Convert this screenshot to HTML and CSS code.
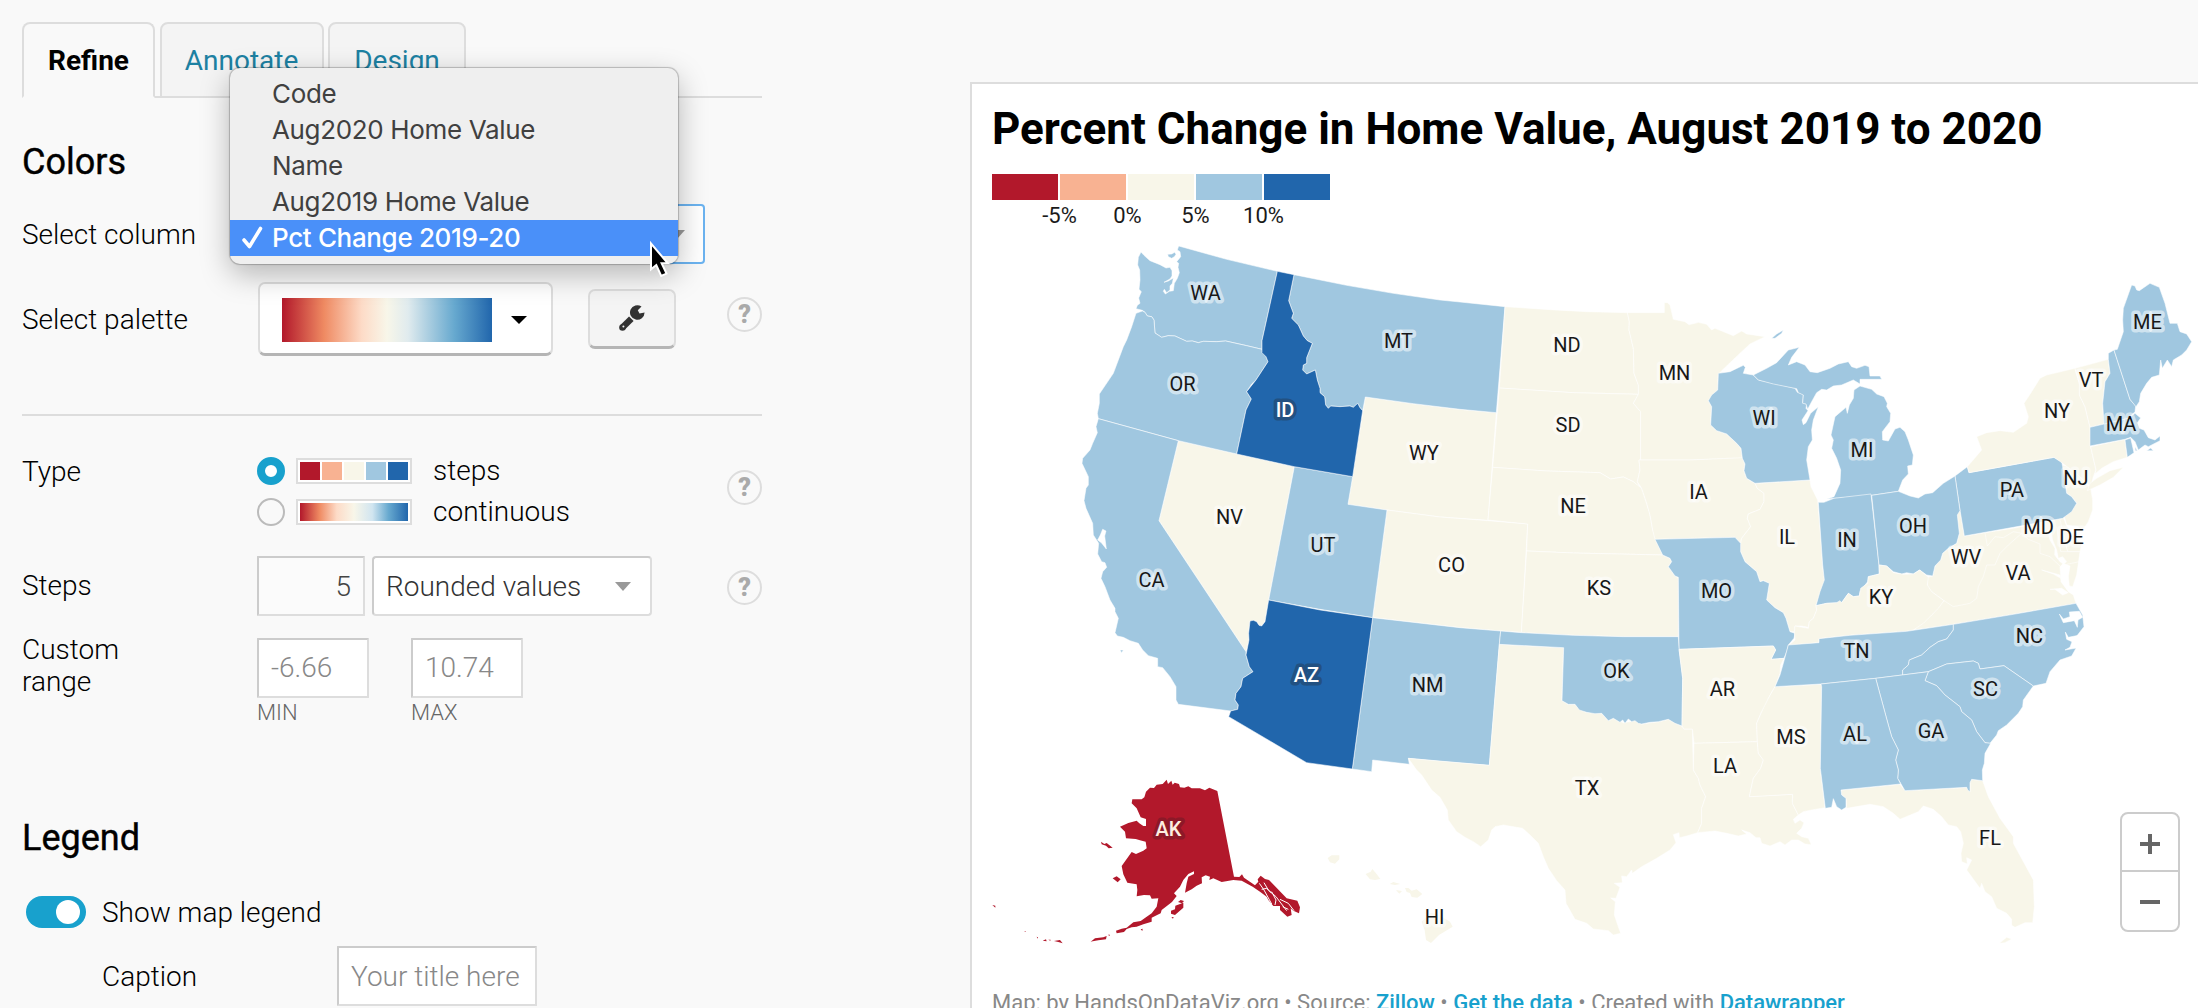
FILE: index.html
```html
<!DOCTYPE html>
<html lang="en">
<head>
<meta charset="utf-8">
<title>Percent Change in Home Value</title>
<link rel="stylesheet" href="styles.css">
</head>
<body>
<main class="editor">
  <section class="panel">
    <nav class="tabs">
      <a class="tab tab-active">Refine</a>
      <a class="tab tab-annotate">Annotate</a>
      <a class="tab tab-design">Design</a>
    </nav>
    <h2 class="heading">Colors</h2>
    <div class="row row-column">
      <label class="label">Select column</label>
      <div class="select select-focus"><i class="arrow"></i></div>
    </div>
    <div class="row row-palette">
      <label class="label">Select palette</label>
      <div class="palette"><span class="palette-bar"></span><i class="arrow arrow-black"></i></div>
      <div class="wrench"><svg width="26" height="26" viewBox="0 0 26 26"><path d="M22.500 1.500L18.800 5.200L20.500 8.500L25.600 7.600A7.300 7.300 0 1 1 22.500 1.500Z" fill="#333"/><path d="M3.400 22.600L12.300 13.700" fill="none" stroke="#333" stroke-width="6.400"/><circle cx="3.500" cy="22.500" r="3.300" fill="#333"/><circle cx="4.400" cy="21.600" r="1" fill="#f4f4f4"/></svg></div>
      <span class="help">?</span>
    </div>
    <hr class="divider">
    <div class="row row-type">
      <label class="label label-line">Type</label>
      <div class="types">
        <div class="type"><i class="radio radio-on"></i><span class="mini"><b class="c1"></b><b class="c2"></b><b class="c3"></b><b class="c4"></b><b class="c5"></b></span>steps</div>
        <div class="type"><i class="radio"></i><span class="mini"><b class="smooth"></b></span>continuous</div>
      </div>
      <span class="help">?</span>
    </div>
    <div class="row row-steps">
      <label class="label">Steps</label>
      <div class="input input-count">5</div>
      <div class="select select-mode"><span>Rounded values</span><i class="arrow"></i></div>
      <span class="help">?</span>
    </div>
    <div class="row row-range">
      <label class="label label-range">Custom<br>range</label>
      <div class="bound"><div class="input">-6.66</div><small>MIN</small></div>
      <div class="bound"><div class="input">10.74</div><small>MAX</small></div>
    </div>
    <h2 class="heading heading-legend">Legend</h2>
    <div class="row row-toggle"><span class="toggle"><i></i></span><label>Show map legend</label></div>
    <div class="row row-caption"><label>Caption</label><div class="input">Your title here</div></div>
  </section>

  <section class="card">
    <h1 class="title">Percent Change in Home Value, August 2019 to 2020</h1>
    <div class="key">
      <div class="key-step"><i class="c1"></i><span>-5%</span></div>
      <div class="key-step"><i class="c2"></i><span>0%</span></div>
      <div class="key-step"><i class="c3"></i><span>5%</span></div>
      <div class="key-step"><i class="c4"></i><span>10%</span></div>
      <div class="key-step"><i class="c5"></i></div>
    </div>
    <svg class="map" width="1206" height="730" viewBox="992 230 1206 730">
      <!-- West -->
      <g class="land" transform="translate(1060 230) scale(.33333)">
        <path class="mid" d="M355 632L703 710L626 1110L615 1175L605 1188L597 1186L590 1175L570 1173L566 1210L567 1230L558 1265L297 872Z"/>
        <path class="mid" d="M916 501L1060 521L1200 538L1309 548L1284 871L1140 861L980 840L864 823Z"/>
        <path class="mid" d="M981 840L1140 861L1284 872L1403 882L1384 1207L1322 1203L1200 1193L938 1163Z"/>
        <path class="up" d="M356 48L500 88L652 124L606 332L606 358L560 347L497 333L470 335L430 334L415 338L397 333L380 334L345 318L325 317L305 322L285 309L282 270L275 260L262 258L255 247L247 241L228 236L232 226L240 220L236 204L244 185L237 178L240 150L239 120L233 105L235 82L243 66L252 76L270 92L300 104L318 114L330 112L336 122L336 138L330 147L312 157L325 153L340 144L337 160L330 168L330 180L320 188L313 178L310 184L316 192L328 184L340 182L343 160L352 145L358 128L354 112L356 100L350 95L362 80L360 65L352 60Z"/>
        <path class="up" d="M323 73L335 72L344 67L348 73L343 80L335 85L325 80Z"/>
        <path class="up" d="M228 250L247 243L255 247L262 258L275 260L282 270L285 309L305 322L325 317L345 318L380 334L397 333L415 338L430 334L470 335L497 333L560 347L606 358L610 370L618 380L624 395L588 450L575 462L560 485L574 507L558 540L530 672L355 632L115 566L112 550L118 520L118 492L160 430L190 350L200 330L215 290Z"/>
        <path class="up" d="M702 134L860 166L1000 190L1140 210L1200 216L1335 230L1309 548L1200 538L1060 521L916 501L908 542L900 533L893 520L880 532L870 528L840 530L812 528L805 535L797 525L794 500L780 488L780 475L772 450L766 420L740 432L728 420L730 405L740 400L740 383L757 340L742 332L730 318L715 285L695 265L700 250L686 212Z"/>
        <path class="up" d="M703 710L878 740L864 823L981 840L938 1163L780 1138L626 1110Z"/>
        <path class="up" d="M115 566L355 632L297 872L558 1265L558 1275L568 1310L579 1325L548 1345L543 1370L528 1390L525 1410L535 1425L533 1438L512 1443L355 1423L348 1410L348 1370L330 1340L308 1313L293 1310L293 1285L265 1277L248 1260L235 1240L210 1232L190 1222L172 1218L165 1208L175 1165L165 1145L165 1135L150 1110L135 1070L123 1045L128 1025L140 1012L135 998L125 995L113 972L116 940L100 915L98 880L78 835L72 812L78 775L85 765L85 740L66 700L68 685L90 660L98 640L112 608L108 590Z"/>
        <path class="water" d="M121 915L128 898L138 903L134 918L139 957L124 938L113 930Z"/>
        <path class="up" d="M180 1260L190 1260L185 1268Z"/>
        <path class="up" d="M938 1163L1200 1193L1322 1203L1318 1243L1288 1606L1140 1594L1045 1585L1048 1603L938 1590L935 1625L877 1617Z"/>
        <path class="high" d="M652 124L702 134L686 212L700 250L695 265L715 285L730 318L742 332L757 340L740 383L740 400L730 405L728 420L740 432L766 420L772 450L780 475L780 488L794 500L797 525L805 535L812 528L840 530L870 528L880 532L893 520L900 533L908 542L878 740L703 710L530 672L558 540L574 507L560 485L588 450L624 395L618 380L606 368L606 332Z"/>
        <path class="high" d="M626 1110L780 1140L938 1163L877 1617L740 1598L506 1460L512 1443L533 1438L535 1425L525 1410L528 1390L543 1370L548 1345L579 1325L568 1310L558 1275L567 1230L566 1210L570 1173L580 1171L590 1175L597 1186L605 1188L615 1175Z"/>
      </g>
      <!-- Plains and Upper Midwest -->
      <g class="land" transform="translate(1440 260) scale(.33333)">
        <path class="mid" d="M195 140L330 149L440 155L562 158L568 185L567 210L580 265L582 340L595 375L595 403L400 398L178 384Z"/>
        <path class="mid" d="M178 384L400 398L595 403L580 430L602 455L602 600L597 600L600 630L592 665L600 683L580 665L550 651L512 657L480 638L320 633L158 622Z"/>
        <path class="mid" d="M158 622L320 633L480 638L512 657L550 651L580 665L605 685L620 730L630 765L638 810L648 840L668 885L400 879L260 873L263 792L144 780Z"/>
        <path class="mid" d="M260 873L400 879L668 885L690 895L695 905L685 920L705 948L715 952L715 1130L550 1130L400 1126L244 1118Z"/>
        <path class="mid" d="M562 158L673 158L673 128L682 128L690 135L700 178L735 185L747 194L765 190L775 187L800 193L815 210L825 205L845 213L880 227L905 213L920 222L975 230L930 252L900 280L845 332L835 345L833 390L805 422L815 440L812 495L830 512L860 522L890 550L903 565L907 595L750 600L602 600L602 455L580 430L595 403L595 375L582 340L580 265L567 210L568 185Z"/>
        <path class="mid" d="M597 600L750 600L907 593L915 612L912 632L920 655L945 670L952 685L972 700L972 725L960 748L925 762L922 775L932 800L905 835L902 850L885 832L645 838L638 810L630 765L620 730L605 685L592 665L600 630Z"/>
        <path class="mid" d="M945 670L1110 660L1113 680L1133 720L1145 868L1148 920L1155 965L1140 1005L1128 1035L1130 1050L1120 1075L1108 1085L1105 1102L1085 1098L1065 1098L1064 1115L1050 1115L1038 1075L1030 1058L1005 1043L980 1020L988 970L970 962L960 965L950 935L915 905L902 875L902 850L905 835L932 800L922 775L925 762L960 748L972 725L972 700L952 685Z"/>
        <path class="up" d="M835 340L870 335L910 316L916 322L910 340L940 345L955 360L1010 372L1065 385L1072 397L1090 403L1088 428L1100 432L1098 445L1104 452L1086 480L1090 494L1098 488L1112 460L1135 440L1120 480L1115 510L1117 540L1105 560L1100 600L1110 660L945 670L920 655L912 632L915 612L907 595L903 565L890 550L860 522L830 512L812 495L815 440L805 422L815 405L833 390Z"/>
        <path class="up" d="M645 838L885 832L902 850L902 875L915 905L950 935L960 965L970 962L988 970L980 1020L1005 1043L1030 1058L1038 1075L1050 1115L1065 1120L1062 1135L1045 1155L1040 1175L1032 1195L993 1198L1007 1170L1000 1158L717 1168L715 952L705 948L685 920L695 905L690 895L668 885Z"/>
      </g>
      <!-- South central -->
      <g class="land" transform="translate(1440 540) scale(.33333)">
        <path class="mid" d="M178 313L371 323L366 482L385 493L405 493L415 505L440 517L485 520L505 542L520 535L550 548L568 545L585 542L605 552L655 545L685 538L726 558L732 567L757 567L760 690L775 715L780 735L797 770L785 805L785 850L773 878L740 888L718 893L717 878L700 884L708 908L690 930L650 955L605 980L577 1000L575 990L560 1010L545 1008L547 1028L523 1030L540 1042L528 1075L512 1074L526 1085L523 1125L535 1160L542 1180L520 1185L505 1172L460 1167L440 1150L405 1138L378 1090L375 1050L350 1022L325 985L310 950L295 910L270 885L248 865L190 855L165 860L155 870L145 900L122 920L100 905L75 892L50 875L25 840L22 810L0 772L-25 750L-55 705L-70 690L-95 655L148 676Z"/>
        <path class="up" d="M182 273L244 278L400 286L550 290L715 290L717 325L728 415L726 558L705 550L685 538L655 545L630 547L605 552L595 550L585 542L575 545L565 537L555 550L548 540L540 547L520 535L505 542L485 520L465 521L440 517L418 510L405 493L385 493L366 482L371 323L178 313Z"/>
        <path class="mid" d="M717 328L1000 318L1007 330L993 358L1032 355L1022 375L1020 400L1005 440L985 475L982 490L965 515L950 550L952 605L762 610L757 567L732 567L726 558L728 415Z"/>
        <path class="mid" d="M762 610L952 605L955 640L970 660L962 685L940 715L928 770L1058 763L1057 790L1075 825L1060 838L1065 850L1080 840L1092 848L1085 865L1070 880L1085 890L1105 895L1114 914L1095 912L1075 900L1055 900L1035 915L1020 905L990 918L965 910L960 893L948 893L930 878L905 870L920 882L895 888L860 880L825 873L773 878L785 850L785 805L797 770L780 735L775 715L760 690Z"/>
        <path class="mid" d="M1005 440L1143 433L1145 440L1141 685L1155 803L1115 810L1090 815L1075 825L1057 790L1058 763L928 770L940 715L962 685L970 660L955 640L952 605L950 550L965 515L985 475Z"/>
      </g>
      <!-- Northeast and Great Lakes -->
      <g class="land" transform="translate(1680 270) scale(.33333)">
        <path class="up" d="M220 315L260 295L290 278L325 240L358 232L335 262L325 285L350 275L375 285L390 305L412 308L450 295L475 282L505 275L515 290L530 295L555 286L567 290L570 318L600 318L605 328L540 328L540 342L520 330L485 345L460 348L440 360L425 358L410 368L395 395L383 418L378 402L368 400L370 375L355 368L350 356L280 342L235 330Z"/>
        <path class="up" d="M275 205L290 192L310 180L305 190L285 205Z"/>
        <path class="up" d="M440 687L462 680L480 640L482 600L470 565L455 535L460 510L453 495L465 440L498 412L502 430L508 405L520 385L522 360L540 348L575 358L590 372L612 380L622 400L620 410L632 430L630 455L607 485L608 510L625 513L645 477L660 472L675 485L685 510L700 555L697 585L683 588L685 612L668 630L655 664L575 676Z"/>
        <path class="up" d="M415 697L432 697L462 685L573 672L597 885L598 912L565 920L563 935L540 965L538 978L520 980L505 970L485 998L440 1000L408 1007L420 965L433 930L428 885Z"/>
        <path class="mid" d="M742 922L758 918L765 888L782 870L788 850L805 835L830 820L838 790L832 745L830 730L840 720L853 798L915 788L1000 775L1148 745L1163 845L1200 845L1195 880L1190 915L1178 950L1168 948L1165 920L1170 888L1150 880L1140 890L1143 935L1165 965L1180 975L1188 1000L1000 1033L820 1063L700 1080L755 1035L792 992L755 965L742 948Z"/>
        <path class="line" d="M915 788L922 828L945 800L970 803L1000 785L1025 790L985 825L960 850L945 885L920 885L910 920L895 950L890 985L870 1000L820 1010L792 992M1025 790L1045 808L1080 822L1080 850L1110 860L1142 890M1130 770L1142 845L1163 845M1160 883L1198 875"/>
        <path class="water" d="M1102 780L1110 810L1125 835L1124 855L1140 875L1150 882L1160 875L1148 860L1135 865L1130 840L1118 810L1112 780ZM1085 900L1120 912L1142 925L1140 915ZM1110 958L1125 958L1148 975L1165 968L1145 955Z"/>
        <path class="mid" d="M1140 750L1150 742L1160 768L1185 800L1205 822L1200 845L1163 845Z"/>
        <path class="mid" d="M1145 585L1170 590L1232 655L1238 690L1238 720L1225 755L1205 785L1195 770L1160 765L1153 740L1190 700L1175 680L1160 670L1157 650L1145 620Z"/>
        <path class="up" d="M825 618L862 590L867 608L1000 584L1122 562L1145 575L1150 600L1157 650L1160 670L1175 680L1190 700L1175 725L1148 745L1000 772L853 798L840 720Z"/>
        <path class="mid" d="M862 590L905 540L890 500L920 488L960 482L1000 487L1040 460L1045 440L1032 400L1055 365L1080 325L1100 315L1185 295L1198 340L1198 375L1215 410L1230 470L1232 530L1248 600L1240 620L1232 650L1200 620L1148 580L1122 562L867 608Z"/>
        <path class="mid" d="M1222 662L1230 640L1250 625L1290 602L1330 592L1300 622L1260 645Z"/>
        <path class="mid" d="M1185 295L1285 268L1290 310L1275 335L1268 400L1272 462L1230 472L1215 410L1198 375L1198 340Z"/>
        <path class="mid" d="M1232 530L1335 508L1342 562L1300 575L1265 595L1245 612L1248 600Z"/>
        <path class="up" d="M1285 250L1302 240L1350 388L1367 408L1365 425L1345 445L1272 465L1268 400L1275 335L1290 310L1285 268Z"/>
        <path class="up" d="M1302 240L1312 238L1330 185L1328 150L1330 115L1355 45L1365 48L1370 60L1378 62L1410 40L1438 52L1455 100L1470 160L1492 160L1500 185L1520 192L1535 215L1520 240L1505 255L1480 270L1475 290L1462 270L1447 295L1442 270L1438 315L1415 322L1400 340L1382 370L1378 395L1368 410L1350 388Z"/>
        <path class="up" d="M1230 472L1345 445L1365 430L1382 444L1372 458L1378 475L1392 480L1405 503L1425 510L1440 498L1440 512L1405 530L1395 525L1375 540L1365 515L1352 502L1335 508L1230 528Z"/>
        <path class="up" d="M1335 510L1352 504L1362 548L1342 562ZM1400 542L1412 534L1420 542ZM1365 530L1372 542L1366 542Z"/>
        <path class="up" d="M575 676L655 664L690 678L715 684L735 672L758 668L790 640L825 618L840 722L832 735L838 790L830 820L805 835L788 850L782 870L765 888L758 918L740 915L718 900L700 912L680 908L665 912L640 905L620 888L597 885Z"/>
      </g>
      <!-- Southeast -->
      <g class="land" transform="translate(1740 560) scale(.33333)">
        <path class="mid" d="M145 257L165 240L163 215L165 198L205 205L208 185L220 175L230 150L228 137L260 130L290 128L300 122L305 128L325 100L340 110L358 108L362 85L383 70L385 50L418 42L417 15L440 18L460 38L490 43L520 42L540 30L565 52L562 75L575 95L612 122L595 145L575 165L550 190L520 210L500 214L330 226L237 236L237 248Z"/>
        <path class="up" d="M145 255L237 248L237 236L330 226L500 214L640 193L640 210L620 237L595 245L570 262L545 285L508 300L505 315L488 330L488 345L407 355L243 372L105 380L120 345L130 310Z"/>
        <path class="up" d="M640 193L820 163L1008 130L1028 165L1032 200L1005 235L1008 265L995 288L960 300L930 335L918 370L880 378L792 317L720 327L715 310L700 303L620 312L565 335L488 345L488 330L505 315L508 300L545 285L570 262L595 245L620 237L640 210Z"/>
        <path class="water" d="M958 162L970 177L990 170L988 156L1018 154L1028 172L1014 180L1012 202L1003 182L970 188ZM976 216L985 232L1020 225L1010 264L975 270L990 262L996 245L980 238Z"/>
        <path class="up" d="M565 335L620 312L700 303L715 310L720 327L792 317L880 378L850 420L848 440L835 460L800 495L775 512L770 525L750 550L735 548L710 515L695 480L665 455L660 440L615 405L590 377L555 362Z"/>
        <path class="mid" d="M303 690L480 673L495 692L680 682L690 695L690 668L695 658L728 662L745 710L780 775L820 830L820 850L880 960L883 1040L878 1088L855 1088L825 1102L815 1096L815 1078L800 1060L770 1045L755 1010L735 995L725 970L720 985L680 930L695 900L680 893L682 912L665 905L663 880L670 850L662 815L650 800L625 795L605 770L580 748L550 738L535 755L480 778L460 760L430 740L390 733L320 745L318 715L305 705Z"/>
        <path class="mid" d="M778 1150L800 1132L815 1137L795 1148Z"/>
        <path class="up" d="M407 355L565 335L555 362L590 377L615 405L660 440L665 455L695 480L710 515L735 548L752 550L735 580L733 610L727 630L728 662L695 658L690 668L690 695L683 690L680 682L495 692L482 670L473 655L475 630L467 600L475 570L455 530L445 495Z"/>
        <path class="up" d="M243 372L407 355L445 495L455 530L475 570L467 600L475 630L473 655L482 672L303 690L305 705L318 715L318 742L305 750L290 740L280 716L275 742L256 745L241 625L245 380Z"/>
      </g>
      <!-- Alaska and Hawaii -->
      <g transform="translate(970 740) scale(.33333)">
        <path class="low" d="M487 178L515 178L523 172L528 155L540 143L552 144L560 134L578 132L590 119L594 132L604 122L608 134L614 128L627 132L630 142L643 143L655 139L665 145L690 145L705 151L718 143L742 153L792 410L808 411L816 403L822 413L855 436L865 425L863 418L872 407L885 417L897 420L950 475L982 482L990 502L987 520L970 512L962 505L965 525L952 530L930 510L930 498L910 498L895 480L890 470L870 455L848 440L815 422L790 420L755 426L730 415L718 420L720 410L707 406L695 412L696 430L680 437L665 448L645 458L650 430L655 410L672 402L672 394L655 402L640 420L630 440L612 460L620 468L606 486L575 510L572 520L545 533L545 545L520 553L500 560L485 562L470 567L462 576L440 580L438 572L455 566L470 563L490 547L512 543L545 520L560 500L565 475L545 476L540 466L522 465L500 469L502 450L500 433L472 428L460 403L455 378L485 336L498 342L520 332L530 325L527 305L510 301L497 297L468 295L465 275L450 260L475 249L500 242L508 250L520 258L528 258L528 237L512 232L500 205L485 190Z"/>
        <path class="low" d="M393 305L403 312L410 309L428 323L416 325L408 317L395 313ZM428 415L440 409L452 418L443 427ZM603 512L615 508L616 497L640 488L640 503L615 525L603 521ZM624 486L632 480L642 483L636 490ZM362 605L375 595L400 592L410 588L408 598L385 601L368 604ZM67 495L76 497L76 503ZM200 590L204 592L203 596ZM218 602L228 598L230 604ZM235 599L242 599L241 602ZM252 603L270 600L278 610L265 606ZM163 573L167 573L166 576ZM414 584L420 584L418 588ZM512 568L518 566L517 573ZM604 532L611 531L609 536Z"/>
        <path class="channel" d="M868 430L882 450L905 492M882 428L895 450L918 470L950 512M875 448L890 445L905 460M905 455L918 480L915 495M930 478L955 490L972 512M938 500L955 508"/>
        <path class="mid" d="M1073 354L1085 346L1108 346L1108 358L1095 371L1080 367ZM1187 402L1202 395L1207 387L1218 400L1231 417L1215 420L1200 418ZM1259 432L1270 426L1291 432L1275 435ZM1278 450L1296 453L1288 461ZM1305 444L1315 444L1325 452L1340 448L1357 462L1342 473L1325 471L1320 459L1310 456ZM1383 518L1407 525L1440 545L1448 560L1407 585L1383 609L1368 600L1364 570L1355 545Z"/>
      </g>
      <g class="names">
        <text x="1205.500" y="300">WA</text><text x="1182.500" y="391">OR</text><text x="1398.500" y="348">MT</text><text x="1424" y="460">WY</text><text x="1229.500" y="524">NV</text><text x="1323" y="552">UT</text><text x="1151.500" y="587">CA</text><text x="1427.500" y="692">NM</text><text x="1451.500" y="572">CO</text>
        <text x="1567" y="352">ND</text><text x="1568" y="432">SD</text><text x="1573" y="513">NE</text><text x="1674.500" y="380">MN</text><text x="1698.500" y="499">IA</text><text x="1764" y="425">WI</text><text x="1787" y="544">IL</text>
        <text x="1599" y="595">KS</text><text x="1716.500" y="598">MO</text><text x="1616.500" y="678">OK</text><text x="1722.500" y="696">AR</text><text x="1791" y="744">MS</text><text x="1725" y="773">LA</text><text x="1587" y="795">TX</text>
        <text x="1862" y="457">MI</text><text x="1847" y="547">IN</text><text x="1913" y="533">OH</text><text x="2012" y="497">PA</text><text x="2057" y="418">NY</text><text x="2091" y="387">VT</text><text x="2147.500" y="329">ME</text><text x="2121" y="431">MA</text><text x="2076" y="485">NJ</text><text x="2038.500" y="534">MD</text><text x="2071.500" y="544">DE</text><text x="1966" y="564">WV</text><text x="2018" y="580">VA</text>
        <text x="1881" y="604">KY</text><text x="1856.500" y="658">TN</text><text x="2029.500" y="643">NC</text><text x="1985.500" y="696">SC</text><text x="1931" y="738">GA</text><text x="1855" y="741">AL</text><text x="1990" y="845">FL</text><text x="1434.500" y="924">HI</text>
        <text class="on-blue" x="1285" y="417">ID</text><text class="on-blue" x="1306.500" y="682">AZ</text><text class="on-red" x="1168.500" y="836">AK</text>
      </g>
    </svg>
    <div class="zoom"><span class="plus"></span><span class="minus"></span></div>
    <p class="credits">Map: by HandsOnDataViz.org • Source: <a>Zillow</a> • <a>Get the data</a> • Created with <a>Datawrapper</a></p>
  </section>
</main>

<ul class="menu">
  <li>Code</li>
  <li>Aug2020 Home Value</li>
  <li>Name</li>
  <li>Aug2019 Home Value</li>
  <li class="chosen"><svg class="check" width="24" height="24" viewBox="0 0 24 24"><path d="M3 14L8.500 20.500L19.500 2.500" fill="none" stroke="#fff" stroke-width="3.600" stroke-linecap="round" stroke-linejoin="round"/></svg>Pct Change 2019-20</li>
</ul>
<svg class="cursor" width="24" height="40" viewBox="0 0 24 40"><path d="M3 4.500V30.300L8.300 26L13.200 37L18.500 34.600L13.600 24.300H19.800Z" fill="#000" stroke="#fff" stroke-width="2"/></svg>
</body>
</html>
```

FILE: styles.css
```css
* { box-sizing: border-box; }
body {
  margin: 0;
  height: 1008px;
  overflow: hidden;
  position: relative;
  background: #f9f9f9;
  color: #000;
  font: 300 28px/33px Roboto, sans-serif;
}
.editor { display: flex; height: 1008px; overflow: hidden; }
.panel { width: 970px; flex: none; padding: 22px 208px 0 22px; }

.tabs { display: flex; height: 76px; gap: 4.5px; background: linear-gradient(#ddd, #ddd) 0 100% / 100% 2px no-repeat; }
.tab {
  border: 2px solid #ddd;
  border-radius: 8px 8px 0 0;
  background: #f4f4f4;
  color: #1d81a2;
  font-weight: 400;
  line-height: 74px;
  text-align: center;
}
.tab-active { width: 133px; background: #f9f9f9; border-bottom-color: #f9f9f9; color: #000; font-weight: 700; }
.tab-annotate { width: 164px; }
.tab-design { width: 138px; }

.heading { margin: 44px 0 0; font-size: 36px; line-height: 40px; font-weight: 400; -webkit-text-stroke: .4px #000; }
.row { display: flex; align-items: center; }
.label { width: 235px; flex: none; }
.help {
  margin-left: auto;
  width: 35px;
  height: 35px;
  border: 2px solid #ddd;
  border-radius: 50%;
  color: #aaa;
  font-size: 25px;
  font-weight: 900;
  line-height: 32px;
  text-align: center;
}
.arrow { border: 8.5px solid transparent; border-top: 9px solid #999; border-bottom: 0; }
.arrow-black { border-width: 8px 8px 0; border-top-color: #000; }
.select, .input { height: 60px; background: #fff; border: 2px solid #ddd; border-top-color: #ccc; border-left-color: #ccc; }
.select { border-radius: 4px; display: flex; align-items: center; justify-content: space-between; }
.input { padding: 0 12px; line-height: 57px; color: #888; border-radius: 1px; white-space: nowrap; }

.row-column { margin-top: 22px; height: 60px; }
.select-focus { width: 448px; border-color: #6bb3f0; padding-right: 18px; justify-content: flex-end; }

.row-palette { margin-top: 18px; height: 74px; }
.palette, .wrench { border: 2px solid #ddd; border-bottom: 3px solid #b5b5b5; border-radius: 7px; display: flex; align-items: center; }
.palette { width: 295px; height: 74px; margin-left: 1px; padding: 2px 0 0 22px; background: #fff; gap: 19px; }
.palette-bar { width: 210px; height: 44px; background: linear-gradient(90deg, #b2182b, #ef8a62 20%, #fddbc7 38%, #f8f6e9 50%, #e0ebee 60%, #67a9cf 82%, #2166ac); }
.wrench { width: 88px; height: 60px; margin-left: 35px; margin-bottom: 1px; justify-content: center; background: #f4f4f4; }
.row-palette .help { margin-bottom: 10px; }

.divider { height: 2px; margin: 58px 0 0; border: 0; background: #ddd; }
.row-type { margin-top: 34px; height: 82px; }
.label-line { align-self: flex-start; line-height: 43px; }
.type { display: flex; align-items: center; height: 41px; }
.radio { width: 28px; height: 28px; border: 2px solid #bbb; border-radius: 50%; }
.radio-on { border: 8px solid #18a1cd; background: #fff; }
.mini { display: flex; gap: 2px; width: 116px; height: 26px; margin: 0 21px 0 11px; padding: 2px; border: 2px solid #ddd; background: #fff; }
.mini b { flex: 1; }
.smooth { background: linear-gradient(90deg, #b2182b, #ef8a62 18%, #fddbc7 34%, #f8f6e9 50%, #d1e5f0 67%, #67a9cf 82%, #2166ac); }
.row-type .help { margin-bottom: 7px; }
.c1 { background: #b2182b; }
.c2 { background: #f8b292; }
.c3 { background: #f8f6e9; }
.c4 { background: #a0c7e0; }
.c5 { background: #2166ac; }

.row-steps { margin-top: 24px; height: 60px; }
.row-steps .label { margin-bottom: 2px; }
.input-count { width: 108px; background: #fbfbfb; text-align: right; color: #444; }
.select-mode { width: 280px; margin-left: 7px; padding: 0 19px 0 12px; color: #333; }
.row-steps .help { margin-bottom: -3px; }

.row-range { margin-top: 18px; align-items: flex-start; }
.label-range { line-height: 32px; }
.bound { width: 112px; margin: 4px 42px 0 0; }
.bound small { display: block; margin-top: 1px; font-size: 22px; line-height: 28px; color: #666; }
.bound .input { line-height: 56px; }

.heading-legend { margin-top: 91px; }
.row-toggle { margin-top: 38px; height: 32px; padding-left: 4px; gap: 16px; }
.toggle { width: 60px; height: 32px; padding: 4px 6px; border-radius: 16px; background: #18a1cd; }
.toggle i { display: block; width: 24px; height: 24px; margin-left: auto; border-radius: 50%; background: #fff; }
.row-caption { margin-top: 18px; padding-left: 80px; }
.row-caption label { width: 235px; }
.row-caption .input { width: 200px; }

.card {
  position: relative;
  flex: none;
  width: 1240px;
  height: 1000px;
  margin-top: 82px;
  padding: 21px 0 0 20px;
  border: 2px solid #ddd;
  background: #fff;
}
.title { margin: 0; font-size: 44px; line-height: 48px; font-weight: 700; white-space: nowrap; }
.key { display: flex; gap: 2px; height: 56px; margin-top: 21px; font-size: 22px; font-weight: 400; line-height: 28px; }
.key-step { width: 66px; }
.key-step i { display: block; height: 26px; }
.key-step span { display: block; width: 135px; margin-top: 2px; text-align: center; color: #1a1a1a; }
.map { display: block; overflow: visible; }
.land path { stroke: rgba(255, 255, 255, .65); stroke-width: 2.5; stroke-linejoin: round; }
.low { fill: #b2182b; }
.mid { fill: #f8f6e9; }
.up { fill: #a0c7e0; }
.high { fill: #2166ac; }
.water { fill: #fff; }
.land .line { fill: none; }
.channel { fill: none; stroke: #fff; stroke-width: 3; }
.names {
  font-size: 20px;
  font-weight: 400;
  text-anchor: middle;
  fill: #181818;
  stroke: rgba(255, 255, 255, .52);
  stroke-width: 7px;
  stroke-linejoin: round;
  paint-order: stroke;
}
.names .on-blue { fill: #fff; stroke: #225182; font-weight: 500; }
.names .on-red { fill: #fdeee0; stroke: #8d1828; font-weight: 500; }
.zoom { position: absolute; left: 1148px; top: 728px; width: 60px; height: 120px; border: 2px solid #ccc; border-radius: 8px; background: #fff; }
.zoom span { display: block; height: 58px; }
.plus { border-bottom: 2px solid #ccc; background: linear-gradient(#666, #666) 50% 28px / 20px 4px no-repeat, linear-gradient(#666, #666) 50% 20px / 4px 20px no-repeat; }
.minus { background: linear-gradient(#666, #666) 50% 28px / 20px 4px no-repeat; }
.credits { margin: 29px 0 0; font-size: 22px; line-height: 28px; font-weight: 400; color: #888; white-space: nowrap; letter-spacing: -.01px; }
.credits a { color: #18a1cd; font-weight: 500; }

.menu {
  position: absolute;
  left: 230px;
  top: 68px;
  width: 448px;
  height: 196px;
  margin: 0;
  padding: 8px 0 0;
  list-style: none;
  border-radius: 10px;
  background: #efefef;
  box-shadow: 0 0 1px 1px rgba(0, 0, 0, .22), 0 10px 30px rgba(0, 0, 0, .28);
  color: #404040;
  font: 400 26px/35px Inter, sans-serif;
  letter-spacing: -.35px;
}
.menu li { height: 36px; padding-left: 42px; white-space: nowrap; }
.menu .chosen { display: flex; padding-left: 11px; gap: 7px; background: #4a90f9; color: #fff; font-weight: 500; }
.check { margin-top: 6px; }
.cursor { position: absolute; left: 648px; top: 239px; }
```
